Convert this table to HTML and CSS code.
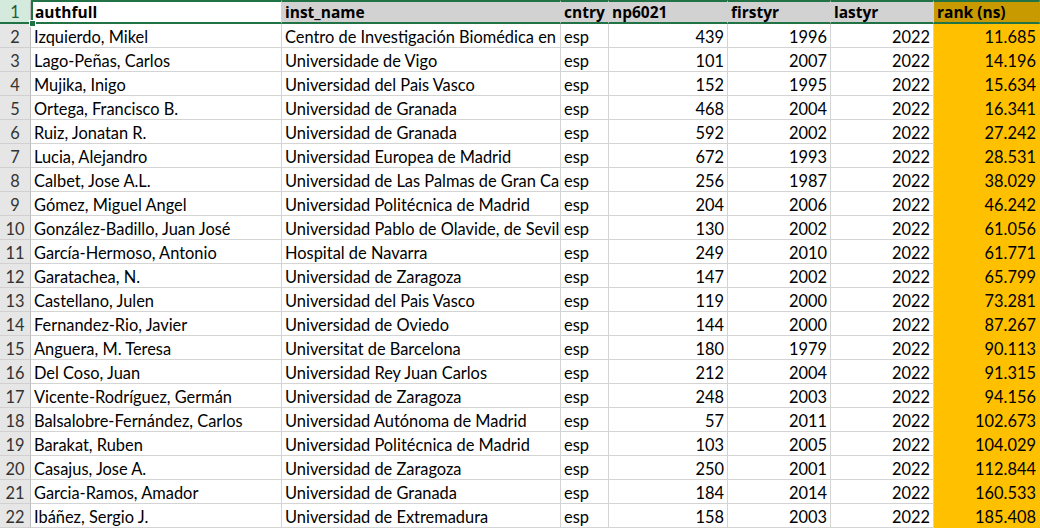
FILE: index.html
```html
<!DOCTYPE html>
<html>
<head>
<meta charset="utf-8">
<link rel="stylesheet" href="styles.css">
</head>
<body>
<div class="sheet">
  <div class="row head">
    <div class="rh rh-sel">1</div>
    <div class="c active">authfull</div>
    <div class="c">inst_name</div>
    <div class="c">cntry</div>
    <div class="c">np6021</div>
    <div class="c">firstyr</div>
    <div class="c">lastyr</div>
    <div class="c rank">rank (ns)</div>
    <div class="handle"></div>
  </div>
  <div class="row"><div class="rh">2</div><div class="c">Izquierdo, Mikel</div><div class="c">Centro de Investigación Biomédica en</div><div class="c">esp</div><div class="c n">439</div><div class="c n">1996</div><div class="c n">2022</div><div class="c n rank">11.685</div></div>
  <div class="row"><div class="rh">3</div><div class="c">Lago-Peñas, Carlos</div><div class="c">Universidade de Vigo</div><div class="c">esp</div><div class="c n">101</div><div class="c n">2007</div><div class="c n">2022</div><div class="c n rank">14.196</div></div>
  <div class="row"><div class="rh">4</div><div class="c">Mujika, Inigo</div><div class="c">Universidad del Pais Vasco</div><div class="c">esp</div><div class="c n">152</div><div class="c n">1995</div><div class="c n">2022</div><div class="c n rank">15.634</div></div>
  <div class="row"><div class="rh">5</div><div class="c">Ortega, Francisco B.</div><div class="c">Universidad de Granada</div><div class="c">esp</div><div class="c n">468</div><div class="c n">2004</div><div class="c n">2022</div><div class="c n rank">16.341</div></div>
  <div class="row"><div class="rh">6</div><div class="c">Ruiz, Jonatan R.</div><div class="c">Universidad de Granada</div><div class="c">esp</div><div class="c n">592</div><div class="c n">2002</div><div class="c n">2022</div><div class="c n rank">27.242</div></div>
  <div class="row"><div class="rh">7</div><div class="c">Lucia, Alejandro</div><div class="c">Universidad Europea de Madrid</div><div class="c">esp</div><div class="c n">672</div><div class="c n">1993</div><div class="c n">2022</div><div class="c n rank">28.531</div></div>
  <div class="row"><div class="rh">8</div><div class="c">Calbet, Jose A.L.</div><div class="c">Universidad de Las Palmas de Gran Ca</div><div class="c">esp</div><div class="c n">256</div><div class="c n">1987</div><div class="c n">2022</div><div class="c n rank">38.029</div></div>
  <div class="row"><div class="rh">9</div><div class="c">Gómez, Miguel Angel</div><div class="c">Universidad Politécnica de Madrid</div><div class="c">esp</div><div class="c n">204</div><div class="c n">2006</div><div class="c n">2022</div><div class="c n rank">46.242</div></div>
  <div class="row"><div class="rh">10</div><div class="c">González-Badillo, Juan José</div><div class="c">Universidad Pablo de Olavide, de Sevil</div><div class="c">esp</div><div class="c n">130</div><div class="c n">2002</div><div class="c n">2022</div><div class="c n rank">61.056</div></div>
  <div class="row"><div class="rh">11</div><div class="c">García-Hermoso, Antonio</div><div class="c">Hospital de Navarra</div><div class="c">esp</div><div class="c n">249</div><div class="c n">2010</div><div class="c n">2022</div><div class="c n rank">61.771</div></div>
  <div class="row"><div class="rh">12</div><div class="c">Garatachea, N.</div><div class="c">Universidad de Zaragoza</div><div class="c">esp</div><div class="c n">147</div><div class="c n">2002</div><div class="c n">2022</div><div class="c n rank">65.799</div></div>
  <div class="row"><div class="rh">13</div><div class="c">Castellano, Julen</div><div class="c">Universidad del Pais Vasco</div><div class="c">esp</div><div class="c n">119</div><div class="c n">2000</div><div class="c n">2022</div><div class="c n rank">73.281</div></div>
  <div class="row"><div class="rh">14</div><div class="c">Fernandez-Rio, Javier</div><div class="c">Universidad de Oviedo</div><div class="c">esp</div><div class="c n">144</div><div class="c n">2000</div><div class="c n">2022</div><div class="c n rank">87.267</div></div>
  <div class="row"><div class="rh">15</div><div class="c">Anguera, M. Teresa</div><div class="c">Universitat de Barcelona</div><div class="c">esp</div><div class="c n">180</div><div class="c n">1979</div><div class="c n">2022</div><div class="c n rank">90.113</div></div>
  <div class="row"><div class="rh">16</div><div class="c">Del Coso, Juan</div><div class="c">Universidad Rey Juan Carlos</div><div class="c">esp</div><div class="c n">212</div><div class="c n">2004</div><div class="c n">2022</div><div class="c n rank">91.315</div></div>
  <div class="row"><div class="rh">17</div><div class="c">Vicente-Rodríguez, Germán</div><div class="c">Universidad de Zaragoza</div><div class="c">esp</div><div class="c n">248</div><div class="c n">2003</div><div class="c n">2022</div><div class="c n rank">94.156</div></div>
  <div class="row"><div class="rh">18</div><div class="c">Balsalobre-Fernández, Carlos</div><div class="c">Universidad Autónoma de Madrid</div><div class="c">esp</div><div class="c n">57</div><div class="c n">2011</div><div class="c n">2022</div><div class="c n rank">102.673</div></div>
  <div class="row"><div class="rh">19</div><div class="c">Barakat, Ruben</div><div class="c">Universidad Politécnica de Madrid</div><div class="c">esp</div><div class="c n">103</div><div class="c n">2005</div><div class="c n">2022</div><div class="c n rank">104.029</div></div>
  <div class="row"><div class="rh">20</div><div class="c">Casajus, Jose A.</div><div class="c">Universidad de Zaragoza</div><div class="c">esp</div><div class="c n">250</div><div class="c n">2001</div><div class="c n">2022</div><div class="c n rank">112.844</div></div>
  <div class="row"><div class="rh">21</div><div class="c">Garcia-Ramos, Amador</div><div class="c">Universidad de Granada</div><div class="c">esp</div><div class="c n">184</div><div class="c n">2014</div><div class="c n">2022</div><div class="c n rank">160.533</div></div>
  <div class="row"><div class="rh">22</div><div class="c">Ibáñez, Sergio J.</div><div class="c">Universidad de Extremadura</div><div class="c">esp</div><div class="c n">158</div><div class="c n">2003</div><div class="c n">2022</div><div class="c n rank">185.408</div></div>
</div>
</body>
</html>
```
FILE: styles.css
```css
html, body {
  margin: 0;
  padding: 0;
  background: #ffffff;
}
.sheet {
  width: 1040px;
  height: 528px;
  overflow: hidden;
  font-family: "Lato", "Liberation Sans", sans-serif;
  font-size: 16.4px;
  color: #000;
}
.row {
  display: grid;
  grid-template-columns: 31px 251px 279px 48px 119px 103px 103px 106px;
  height: 24px;
  position: relative;
}
.c {
  box-sizing: border-box;
  height: 24px;
  line-height: 24px;
  padding: 1px 3px 0 3px;
  border-right: 1px solid #d4d4d4;
  border-bottom: 1px solid #d4d4d4;
  white-space: nowrap;
  overflow: hidden;
}
.n {
  text-align: right;
}
.rank {
  background: #ffc000;
  border-right-color: #ffc000;
  border-bottom-color: #ffc000;
}
.rh {
  box-sizing: border-box;
  height: 24px;
  line-height: 24px;
  padding-top: 1px;
  background: #e6e6e6;
  color: #333;
  text-align: center;
  border-right: 1px solid #bcbcbc;
  border-bottom: 1px solid #d0d0d0;
}
.head .c {
  font-family: "Open Sans", "Lato", sans-serif;
  font-size: 15.5px;
  font-weight: bold;
  background: #d2d2d2;
  border-top: 2px solid #217346;
  border-bottom: 2px solid #217346;
  border-right: 1px solid #d2d2d2;
  line-height: 20px;
  padding-top: 0;
}
.head .c.active {
  background: #ffffff;
  border-left: 2px solid #217346;
  padding-left: 2px;
}
.head .c.rank {
  background: #c99a00;
  border-right-color: #c99a00;
}
.head .rh-sel {
  background: #d3eadc;
  color: #1e5c38;
  border-top: 2px solid #d3eadc;
  border-bottom: 2px solid #217346;
  line-height: 20px;
  padding-top: 0;
}
.handle {
  position: absolute;
  left: 29px;
  top: 20px;
  width: 5px;
  height: 5px;
  background: #217346;
  border: 1px solid #ffffff;
  z-index: 2;
}
```
